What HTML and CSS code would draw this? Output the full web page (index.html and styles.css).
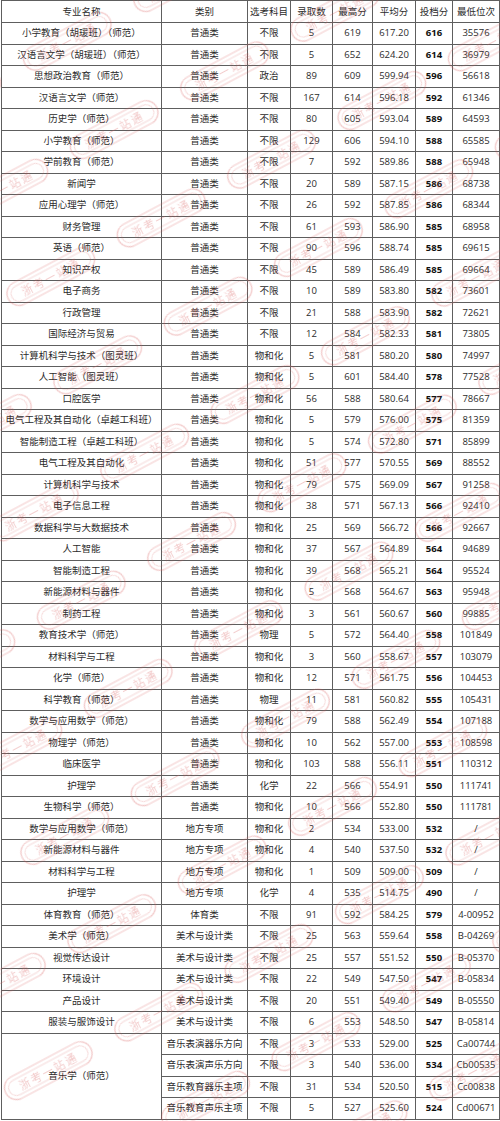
FILE: index.html
```html
<!DOCTYPE html>
<html lang="zh-CN">
<head>
<meta charset="utf-8">
<title>录取分数</title>
<link rel="stylesheet" href="styles.css">
</head>
<body>
<div class="page">
<table class="scores">
<colgroup>
<col class="c-name"><col class="c-cat"><col class="c-subj"><col class="c-num"><col class="c-max"><col class="c-avg"><col class="c-td"><col class="c-rank">
</colgroup>
<thead>
<tr class="head"><th>专业名称</th><th>类别</th><th>选考科目</th><th>录取数</th><th>最高分</th><th>平均分</th><th>投档分</th><th>最低位次</th></tr>
</thead>
<tbody>
<tr><td>小学教育（胡瑗班）（师范）</td><td>普通类</td><td>不限</td><td>5</td><td>619</td><td>617.20</td><td class="b">616</td><td>35576</td></tr>
<tr><td>汉语言文学（胡瑗班）（师范）</td><td>普通类</td><td>不限</td><td>5</td><td>652</td><td>624.20</td><td class="b">614</td><td>36979</td></tr>
<tr><td>思想政治教育（师范）</td><td>普通类</td><td>政治</td><td>89</td><td>609</td><td>599.94</td><td class="b">596</td><td>56618</td></tr>
<tr><td>汉语言文学（师范）</td><td>普通类</td><td>不限</td><td>167</td><td>614</td><td>596.18</td><td class="b">592</td><td>61346</td></tr>
<tr><td>历史学（师范）</td><td>普通类</td><td>不限</td><td>80</td><td>605</td><td>593.04</td><td class="b">589</td><td>64593</td></tr>
<tr><td>小学教育（师范）</td><td>普通类</td><td>不限</td><td>129</td><td>606</td><td>594.10</td><td class="b">588</td><td>65585</td></tr>
<tr><td>学前教育（师范）</td><td>普通类</td><td>不限</td><td>7</td><td>592</td><td>589.86</td><td class="b">588</td><td>65948</td></tr>
<tr><td>新闻学</td><td>普通类</td><td>不限</td><td>20</td><td>589</td><td>587.15</td><td class="b">586</td><td>68738</td></tr>
<tr><td>应用心理学（师范）</td><td>普通类</td><td>不限</td><td>26</td><td>592</td><td>587.85</td><td class="b">586</td><td>68344</td></tr>
<tr><td>财务管理</td><td>普通类</td><td>不限</td><td>61</td><td>593</td><td>586.90</td><td class="b">585</td><td>68958</td></tr>
<tr><td>英语（师范）</td><td>普通类</td><td>不限</td><td>90</td><td>596</td><td>588.74</td><td class="b">585</td><td>69615</td></tr>
<tr><td>知识产权</td><td>普通类</td><td>不限</td><td>45</td><td>589</td><td>586.49</td><td class="b">585</td><td>69664</td></tr>
<tr><td>电子商务</td><td>普通类</td><td>不限</td><td>10</td><td>589</td><td>583.80</td><td class="b">582</td><td>73601</td></tr>
<tr><td>行政管理</td><td>普通类</td><td>不限</td><td>21</td><td>588</td><td>583.90</td><td class="b">582</td><td>72621</td></tr>
<tr><td>国际经济与贸易</td><td>普通类</td><td>不限</td><td>12</td><td>584</td><td>582.33</td><td class="b">581</td><td>73805</td></tr>
<tr><td>计算机科学与技术（图灵班）</td><td>普通类</td><td>物和化</td><td>5</td><td>581</td><td>580.20</td><td class="b">580</td><td>74997</td></tr>
<tr><td>人工智能（图灵班）</td><td>普通类</td><td>物和化</td><td>5</td><td>601</td><td>584.40</td><td class="b">578</td><td>77528</td></tr>
<tr><td>口腔医学</td><td>普通类</td><td>物和化</td><td>56</td><td>588</td><td>580.64</td><td class="b">577</td><td>78667</td></tr>
<tr><td>电气工程及其自动化（卓越工科班）</td><td>普通类</td><td>物和化</td><td>5</td><td>579</td><td>576.00</td><td class="b">575</td><td>81359</td></tr>
<tr><td>智能制造工程（卓越工科班）</td><td>普通类</td><td>物和化</td><td>5</td><td>574</td><td>572.80</td><td class="b">571</td><td>85899</td></tr>
<tr><td>电气工程及其自动化</td><td>普通类</td><td>物和化</td><td>51</td><td>577</td><td>570.55</td><td class="b">569</td><td>88552</td></tr>
<tr><td>计算机科学与技术</td><td>普通类</td><td>物和化</td><td>79</td><td>575</td><td>569.09</td><td class="b">567</td><td>91258</td></tr>
<tr><td>电子信息工程</td><td>普通类</td><td>物和化</td><td>38</td><td>571</td><td>567.13</td><td class="b">566</td><td>92410</td></tr>
<tr><td>数据科学与大数据技术</td><td>普通类</td><td>物和化</td><td>25</td><td>569</td><td>566.72</td><td class="b">566</td><td>92667</td></tr>
<tr><td>人工智能</td><td>普通类</td><td>物和化</td><td>37</td><td>567</td><td>564.89</td><td class="b">564</td><td>94689</td></tr>
<tr><td>智能制造工程</td><td>普通类</td><td>物和化</td><td>39</td><td>568</td><td>565.21</td><td class="b">564</td><td>95524</td></tr>
<tr><td>新能源材料与器件</td><td>普通类</td><td>物和化</td><td>5</td><td>568</td><td>564.67</td><td class="b">563</td><td>95948</td></tr>
<tr><td>制药工程</td><td>普通类</td><td>物和化</td><td>3</td><td>561</td><td>560.67</td><td class="b">560</td><td>99885</td></tr>
<tr><td>教育技术学（师范）</td><td>普通类</td><td>物理</td><td>5</td><td>572</td><td>564.40</td><td class="b">558</td><td>101849</td></tr>
<tr><td>材料科学与工程</td><td>普通类</td><td>物和化</td><td>3</td><td>560</td><td>558.67</td><td class="b">557</td><td>103079</td></tr>
<tr><td>化学（师范）</td><td>普通类</td><td>物和化</td><td>12</td><td>571</td><td>561.75</td><td class="b">556</td><td>104453</td></tr>
<tr><td>科学教育（师范）</td><td>普通类</td><td>物理</td><td>11</td><td>581</td><td>560.82</td><td class="b">555</td><td>105431</td></tr>
<tr><td>数学与应用数学（师范）</td><td>普通类</td><td>物和化</td><td>79</td><td>588</td><td>562.49</td><td class="b">554</td><td>107188</td></tr>
<tr><td>物理学（师范）</td><td>普通类</td><td>物和化</td><td>10</td><td>562</td><td>557.00</td><td class="b">553</td><td>108598</td></tr>
<tr><td>临床医学</td><td>普通类</td><td>物和化</td><td>103</td><td>588</td><td>556.11</td><td class="b">551</td><td>110312</td></tr>
<tr><td>护理学</td><td>普通类</td><td>化学</td><td>22</td><td>566</td><td>554.91</td><td class="b">550</td><td>111741</td></tr>
<tr><td>生物科学（师范）</td><td>普通类</td><td>物和化</td><td>10</td><td>566</td><td>552.80</td><td class="b">550</td><td>111781</td></tr>
<tr><td>数学与应用数学（师范）</td><td>地方专项</td><td>物和化</td><td>2</td><td>534</td><td>533.00</td><td class="b">532</td><td>/</td></tr>
<tr><td>新能源材料与器件</td><td>地方专项</td><td>物和化</td><td>4</td><td>540</td><td>537.50</td><td class="b">532</td><td>/</td></tr>
<tr><td>材料科学与工程</td><td>地方专项</td><td>物和化</td><td>1</td><td>509</td><td>509.00</td><td class="b">509</td><td>/</td></tr>
<tr><td>护理学</td><td>地方专项</td><td>化学</td><td>4</td><td>535</td><td>514.75</td><td class="b">490</td><td>/</td></tr>
<tr><td>体育教育（师范）</td><td>体育类</td><td>不限</td><td>91</td><td>592</td><td>584.25</td><td class="b">579</td><td>4-00952</td></tr>
<tr><td>美术学（师范）</td><td>美术与设计类</td><td>不限</td><td>25</td><td>563</td><td>559.64</td><td class="b">558</td><td>B-04269</td></tr>
<tr><td>视觉传达设计</td><td>美术与设计类</td><td>不限</td><td>25</td><td>557</td><td>551.52</td><td class="b">550</td><td>B-05370</td></tr>
<tr><td>环境设计</td><td>美术与设计类</td><td>不限</td><td>22</td><td>549</td><td>547.50</td><td class="b">547</td><td>B-05834</td></tr>
<tr><td>产品设计</td><td>美术与设计类</td><td>不限</td><td>20</td><td>551</td><td>549.40</td><td class="b">549</td><td>B-05550</td></tr>
<tr><td>服装与服饰设计</td><td>美术与设计类</td><td>不限</td><td>6</td><td>553</td><td>548.50</td><td class="b">547</td><td>B-05814</td></tr>
<tr><td rowspan="4">音乐学（师范）</td><td>音乐表演器乐方向</td><td>不限</td><td>3</td><td>533</td><td>529.00</td><td class="b">525</td><td>Ca00744</td></tr>
<tr><td>音乐表演声乐方向</td><td>不限</td><td>3</td><td>540</td><td>536.00</td><td class="b">534</td><td>Cb00535</td></tr>
<tr><td>音乐教育器乐主项</td><td>不限</td><td>31</td><td>534</td><td>520.50</td><td class="b">515</td><td>Cc00838</td></tr>
<tr><td>音乐教育声乐主项</td><td>不限</td><td>5</td><td>527</td><td>525.60</td><td class="b">524</td><td>Cd00671</td></tr>
</tbody>
</table>
<svg class="watermark" width="500" height="1121" viewBox="0 0 500 1121" aria-hidden="true">
<defs>
<pattern id="stamp" width="125" height="100" patternUnits="userSpaceOnUse" patternTransform="rotate(-28) translate(-20 20)">
<rect x="12" y="36" width="96" height="24" rx="12" fill="none" stroke="currentColor" stroke-width="1.2"/>
<rect x="16" y="40" width="88" height="16" rx="8" fill="none" stroke="currentColor" stroke-width="0.7"/>
<text x="60" y="52.5" text-anchor="middle" class="wm-text">浙考一站通</text>
</pattern>
</defs>
<rect width="500" height="1121" fill="url(#stamp)"/>
</svg>
</div>
</body>
</html>
```
FILE: styles.css
```css
html, body {
  margin: 0;
  padding: 0;
  background: #ffffff;
}
.page {
  position: relative;
  width: 500px;
  height: 1121px;
  overflow: hidden;
}
.scores {
  border-collapse: collapse;
  table-layout: fixed;
  width: 498px;
  margin: 0 0 0 1px;
  font-family: "Open Sans", "Noto Sans CJK SC", sans-serif;
  font-size: 9.5px;
  color: #2b2b2b;
}
.c-name { width: 160px; }
.c-cat { width: 86px; }
.c-subj { width: 43px; }
.c-num { width: 42px; }
.c-max { width: 40px; }
.c-avg { width: 43px; }
.c-td { width: 37px; }
.c-rank { width: 47px; }
.scores th,
.scores td {
  border: 1px solid #5e5e5e;
  padding: 0;
  text-align: center;
  vertical-align: middle;
  white-space: nowrap;
  overflow: hidden;
  font-weight: normal;
  line-height: 12px;
}
.scores .head th {
  height: 21px;
}
.scores td {
  height: 20.5px;
}
.scores td.b {
  font-weight: 700;
  color: #111111;
}
.watermark {
  position: absolute;
  left: 0;
  top: 0;
  color: rgba(214, 84, 84, 0.32);
  pointer-events: none;
}
.wm-text {
  font-family: "Noto Sans CJK SC", sans-serif;
  font-size: 11px;
  letter-spacing: 2px;
  fill: rgba(214, 84, 84, 0.32);
}
```
